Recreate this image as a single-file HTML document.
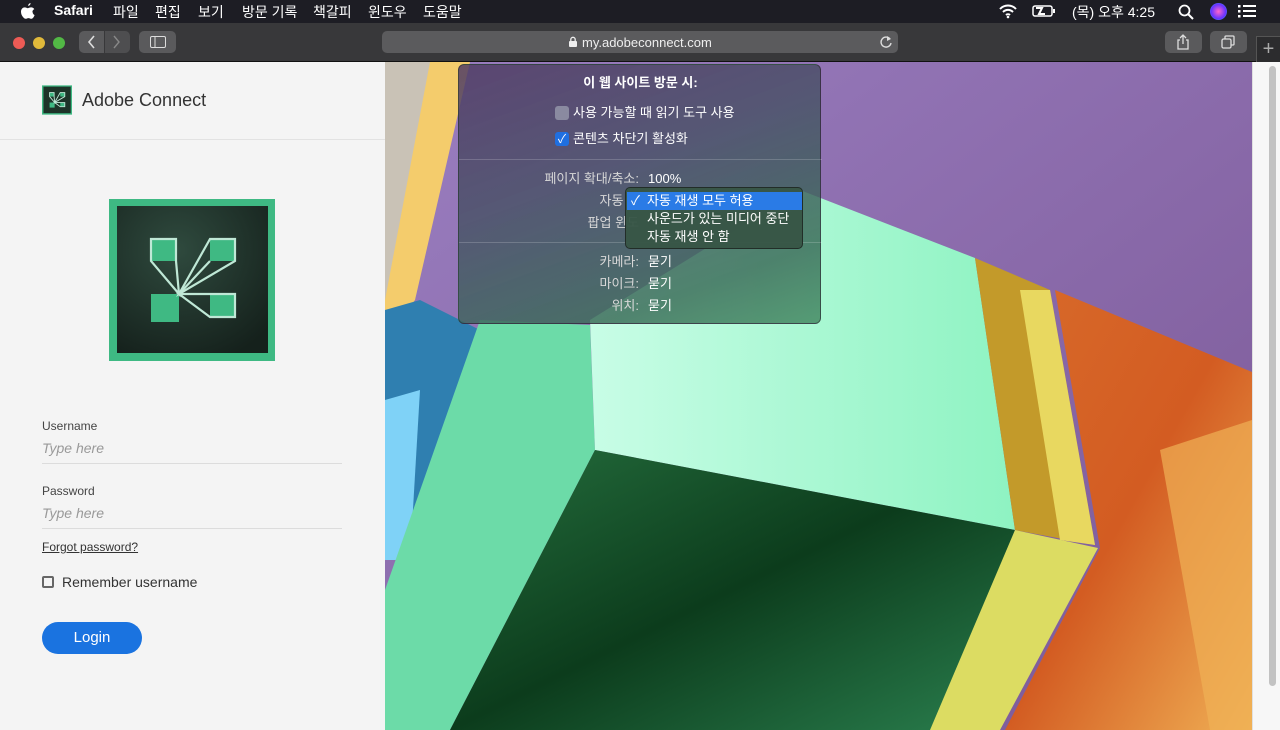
<!DOCTYPE html>
<html><head><meta charset="utf-8">
<style>
*{margin:0;padding:0;box-sizing:border-box}
body{width:1280px;height:730px;overflow:hidden;font-family:"Liberation Sans","Noto Sans CJK KR",sans-serif;background:#1e1e22;position:relative}
.menubar{position:absolute;left:0;top:0;width:1280px;height:23px;background:#1d1d24;color:#fff;font-size:14px}
.menubar span{position:absolute;top:2px}
.toolbar{position:absolute;left:0;top:23px;width:1280px;height:39px;background:#38383a;border-bottom:1px solid #111}
.btn{position:absolute;background:#5a5a5c;border-radius:5px}
.left{position:absolute;left:0;top:62px;width:385px;height:668px;background:#f4f4f4}
.bg{position:absolute;left:385px;top:62px;width:867px;height:668px}
.scroll{position:absolute;left:1252px;top:62px;width:28px;height:668px;background:#f7f7f7;border-left:1px solid #e0e0e0}
.pop{position:absolute;left:458px;top:64px;width:363px;height:260px;border-radius:6px;background:linear-gradient(160deg,rgba(80,60,100,0.85) 0%,rgba(70,80,100,0.8) 40%,rgba(60,110,90,0.85) 80%,rgba(70,140,100,0.85) 100%);border:1px solid rgba(30,30,30,0.5);color:#fff;font-size:13px;line-height:16px}
.pop .t{position:absolute;white-space:nowrap}
.lbl{color:#d8d8d8;text-align:right;width:170px;left:10px}
.sep{position:absolute;left:0;width:363px;height:1px;background:rgba(255,255,255,0.18)}
.dd{position:absolute;left:625px;top:187px;width:178px;height:62px;background:rgba(55,85,70,0.96);border:1px solid rgba(20,20,20,0.6);border-radius:5px;color:#fff;font-size:13px;line-height:16px}
</style></head><body>
<div class="menubar">
<svg style="position:absolute;left:20px;top:3px" width="15" height="17" viewBox="0 0 15 17"><path d="M10.5 0c.2 1.3-.9 2.8-2.3 2.9-.2-1.2 1-2.7 2.3-2.9zM12.6 9c0 2.2 1.9 3 2 3-.5 1.6-1.7 3.8-3.2 3.8-1.2 0-1.5-.7-2.9-.7s-1.8.7-2.9.7C4 15.8 1 12.6 1 8.8 1 6 2.9 4.4 4.7 4.4c1.300 0 2.1.8 3.1.8.9 0 1.9-.9 3.3-.8.6 0 2.2.2 3.2 1.7-2.5 1.5-1.7 2.9-1.7 2.9z" fill="#fff"/></svg>
<span style="left:54px;font-weight:bold">Safari</span>
<span style="left:113px">파일</span><span style="left:155px">편집</span><span style="left:198px">보기</span><span style="left:242px">방문 기록</span><span style="left:313px">책갈피</span><span style="left:368px">윈도우</span><span style="left:423px">도움말</span>
<svg style="position:absolute;left:998px;top:4px" width="20" height="15" viewBox="0 0 20 15"><path d="M2 5a11 11 0 0 1 16 0M5 8a7 7 0 0 1 10 0M8 11a3 3 0 0 1 4 0" stroke="#fff" stroke-width="2" fill="none"/><circle cx="10" cy="13" r="1.3" fill="#fff"/></svg>
<svg style="position:absolute;left:1032px;top:5px" width="24" height="12" viewBox="0 0 24 12"><rect x="1" y="1" width="19" height="10" rx="2" stroke="#fff" fill="none" stroke-width="1.5"/><rect x="21" y="4" width="2" height="4" fill="#fff"/><path d="M4 3h6l-3 6h6" stroke="#fff" stroke-width="2" fill="none"/></svg>
<span style="left:1072px">(목) 오후 4:25</span>
<svg style="position:absolute;left:1178px;top:4px" width="16" height="16"><circle cx="6.5" cy="6.5" r="5" stroke="#fff" stroke-width="1.8" fill="none"/><path d="M10 10l5 5" stroke="#fff" stroke-width="2"/></svg>
<div style="position:absolute;left:1210px;top:3px;width:17px;height:17px;border-radius:50%;background:radial-gradient(circle,#f6c,#63f 60%,#3cf)"></div>
<svg style="position:absolute;left:1238px;top:5px" width="18" height="13"><g fill="#fff"><rect x="0" y="0" width="2.5" height="2.5"/><rect x="0" y="5" width="2.5" height="2.5"/><rect x="0" y="10" width="2.5" height="2.5"/><rect x="5" y="0" width="13" height="2"/><rect x="5" y="5" width="13" height="2"/><rect x="5" y="10" width="13" height="2"/></g></svg>
</div>
<div class="toolbar">
<div style="position:absolute;left:13px;top:14px;width:12px;height:12px;border-radius:50%;background:#ed5b55"></div>
<div style="position:absolute;left:33px;top:14px;width:12px;height:12px;border-radius:50%;background:#e0b93a"></div>
<div style="position:absolute;left:53px;top:14px;width:12px;height:12px;border-radius:50%;background:#52b845"></div>
<div class="btn" style="left:79px;top:8px;width:25px;height:22px;border-radius:5px 0 0 5px"></div>
<div class="btn" style="left:105px;top:8px;width:25px;height:22px;border-radius:0 5px 5px 0;background:#4e4e50"></div>
<svg style="position:absolute;left:86px;top:12px" width="40" height="14"><path d="M8 1L3 7l5 6" stroke="#ddd" stroke-width="1.6" fill="none"/><path d="M28 1l5 6-5 6" stroke="#888" stroke-width="1.4" fill="none"/></svg>
<div class="btn" style="left:139px;top:8px;width:37px;height:22px"></div>
<svg style="position:absolute;left:150px;top:13px" width="16" height="12"><rect x=".5" y=".5" width="15" height="11" rx="1.5" stroke="#ddd" fill="none"/><path d="M5 .5v11" stroke="#ddd"/></svg>
<div class="btn" style="left:382px;top:8px;width:516px;height:22px;background:#5b5b5d"></div>
<svg style="position:absolute;left:568px;top:13px" width="10" height="12"><rect x="1" y="5" width="8" height="6" rx="1" fill="#eee"/><path d="M2.8 5V3.5a2.2 2.2 0 0 1 4.4 0V5" stroke="#eee" stroke-width="1.3" fill="none"/></svg>
<span style="position:absolute;left:582px;top:12px;color:#eee;font-size:13px">my.adobeconnect.com</span>
<svg style="position:absolute;left:879px;top:12px" width="14" height="14"><path d="M11 4A5 5 0 1 0 12 8" stroke="#ddd" stroke-width="1.4" fill="none"/><path d="M8 1l4 3-4 2" fill="#ddd"/></svg>
<div class="btn" style="left:1165px;top:8px;width:37px;height:22px"></div>
<svg style="position:absolute;left:1176px;top:11px" width="14" height="16"><path d="M4 6H2v9h10V6h-2M7 10V1M4 4l3-3 3 3" stroke="#ddd" stroke-width="1.3" fill="none"/></svg>
<div class="btn" style="left:1210px;top:8px;width:37px;height:22px"></div>
<svg style="position:absolute;left:1221px;top:12px" width="14" height="14"><rect x="1" y="4" width="9" height="9" rx="1.5" stroke="#ddd" fill="none" stroke-width="1.3"/><path d="M4 4V2a1 1 0 0 1 1-1h7a1 1 0 0 1 1 1v7a1 1 0 0 1-1 1h-2" stroke="#ddd" fill="none" stroke-width="1.3"/></svg>
<div style="position:absolute;left:1256px;top:13px;width:24px;height:26px;background:#2c2c2e;border-left:1px solid #555;border-top:1px solid #555;color:#aaa;font-size:20px;text-align:center;line-height:24px">+</div>
</div>

<div class="left">
<div style="position:absolute;left:0;top:77px;width:385px;height:1px;background:#e2e2e2"></div>
<svg style="position:absolute;left:42px;top:23px" width="30" height="30" viewBox="0 0 166 162">
<rect x="0" y="0" width="166" height="162" fill="#3eb983"/>
<rect x="8" y="7" width="151" height="147" fill="#1d3328"/>
<g fill="#3fb983"><rect x="42" y="40" width="25" height="22"/><rect x="101" y="40" width="25" height="22"/><rect x="42" y="95" width="28" height="28"/><rect x="101" y="96" width="25" height="22"/></g>
<g stroke="#bfe8d6" stroke-width="5" fill="none"><path d="M42 40h25v22L70 95 42 62z"/><path d="M70 95L101 40h25v22z"/><path d="M70 95h56v23h-25z"/></g>
</svg>
<span style="position:absolute;left:82px;top:28px;font-size:18px;color:#333">Adobe Connect</span>
<svg style="position:absolute;left:109px;top:137px" width="166" height="162" viewBox="0 0 166 162">
<defs><radialGradient id="g" cx=".4" cy=".3" r=".8"><stop offset="0" stop-color="#2f4a3e"/><stop offset="1" stop-color="#15211c"/></radialGradient></defs>
<rect x="0" y="0" width="166" height="162" fill="#3eb983"/>
<rect x="8" y="7" width="151" height="147" fill="url(#g)"/>
<g fill="#3fb983"><rect x="42" y="40" width="25" height="22"/><rect x="101" y="40" width="25" height="22"/><rect x="42" y="95" width="28" height="28"/><rect x="101" y="96" width="25" height="22"/></g>
<g stroke="#bfe8d6" stroke-width="2.2" fill="none"><path d="M42 40h25v22L70 95 42 62z"/><path d="M70 95L101 40h25v22z"/><path d="M70 95L101 62"/><path d="M70 95h56v23h-25z"/></g>
</svg>
<span style="position:absolute;left:42px;top:357px;font-size:12px;color:#444">Username</span>
<span style="position:absolute;left:42px;top:378px;font-size:14px;color:#999;font-style:italic">Type here</span>
<div style="position:absolute;left:42px;top:401px;width:300px;height:1px;background:#dcdcdc"></div>
<span style="position:absolute;left:42px;top:422px;font-size:12px;color:#444">Password</span>
<span style="position:absolute;left:42px;top:443px;font-size:14px;color:#999;font-style:italic">Type here</span>
<div style="position:absolute;left:42px;top:466px;width:300px;height:1px;background:#dcdcdc"></div>
<span style="position:absolute;left:42px;top:478px;font-size:12px;color:#333;text-decoration:underline">Forgot password?</span>
<div style="position:absolute;left:42px;top:514px;width:12px;height:12px;border:2px solid #666;border-radius:2px"></div>
<span style="position:absolute;left:62px;top:512px;font-size:14px;color:#333">Remember username</span>
<div style="position:absolute;left:42px;top:560px;width:100px;height:32px;border-radius:16px;background:#1a73e0;color:#fff;font-size:15px;text-align:center;line-height:32px">Login</div>
</div>

<svg class="bg" viewBox="385 62 867 668" preserveAspectRatio="none">
<defs>
<linearGradient id="pu" x1="0" y1="0" x2="1" y2="1"><stop offset="0" stop-color="#9a7ec0"/><stop offset="1" stop-color="#7b5896"/></linearGradient>
<linearGradient id="mi" x1="0" y1="0" x2="1" y2="0"><stop offset="0" stop-color="#c8fde6"/><stop offset="1" stop-color="#8ef3c2"/></linearGradient>
<linearGradient id="dg" x1="0" y1="0" x2="1" y2="1"><stop offset="0" stop-color="#256f3e"/><stop offset=".5" stop-color="#0c3c1c"/><stop offset="1" stop-color="#2a7f4e"/></linearGradient>
<linearGradient id="or" x1="0" y1="0" x2="1" y2="1"><stop offset="0" stop-color="#d86a2a"/><stop offset=".5" stop-color="#d35c22"/><stop offset="1" stop-color="#f0b055"/></linearGradient>
</defs>
<rect x="385" y="62" width="867" height="668" fill="url(#pu)"/>
<polygon points="385,62 430,62 430,230 385,360" fill="#c9c2b6"/>
<polygon points="430,62 470,62 415,300 385,340 385,300" fill="#f4cc6c"/>
<polygon points="385,310 420,300 480,330 450,560 385,560" fill="#2f7fb0"/>
<polygon points="385,400 420,390 410,560 385,560" fill="#7fd2f7"/>
<polygon points="480,320 590,325 595,450 450,730 385,730 385,590" fill="#6cdba8"/>
<polygon points="590,320 800,190 975,258 1015,530 595,450" fill="url(#mi)"/>
<polygon points="595,450 1015,530 940,730 450,730" fill="url(#dg)"/>
<polygon points="975,258 1050,290 1095,545 1015,530" fill="#c39a2a"/>
<polygon points="1020,290 1050,290 1095,545 1060,540" fill="#e8d860"/>
<polygon points="1015,530 1098,548 1000,730 930,730" fill="#dcdc62"/>
<polygon points="1055,290 1252,372 1252,730 1005,730 1100,548" fill="url(#or)"/>
<polygon points="1160,450 1252,420 1252,730 1210,730" fill="#f0b055" opacity=".7"/>
</svg>
<div class="scroll"><div style="position:absolute;left:16px;top:4px;width:7px;height:620px;border-radius:4px;background:#c2c2c2"></div></div>

<div class="pop">
<div class="t" style="left:0;width:363px;text-align:center;top:10px;font-weight:bold">이 웹 사이트 방문 시:</div>
<div style="position:absolute;left:96px;top:41px;width:14px;height:14px;border-radius:3px;background:#8a8aa0"></div>
<div class="t" style="left:114px;top:40px">사용 가능할 때 읽기 도구 사용</div>
<div style="position:absolute;left:96px;top:67px;width:14px;height:14px;border-radius:3px;background:#1f6fe0;color:#fff;font-size:12px;line-height:14px;text-align:center">✓</div>
<div class="t" style="left:114px;top:66px">콘텐츠 차단기 활성화</div>
<div class="sep" style="top:94px"></div>
<div class="t lbl" style="top:106px">페이지 확대/축소:</div>
<div class="t" style="left:189px;top:106px">100%</div>
<div class="t lbl" style="top:128px">자동 재</div>
<div class="t lbl" style="top:150px">팝업 윈도</div>
<div class="sep" style="top:177px"></div>
<div class="t lbl" style="top:189px">카메라:</div><div class="t" style="left:189px;top:189px">묻기</div>
<div class="t lbl" style="top:211px">마이크:</div><div class="t" style="left:189px;top:211px">묻기</div>
<div class="t lbl" style="top:233px">위치:</div><div class="t" style="left:189px;top:233px">묻기</div>
</div>
<div class="dd">
<div style="position:absolute;left:1px;top:4px;width:175px;height:18px;background:#2a7be6"></div>
<div style="position:absolute;left:5px;top:5px">✓</div>
<div style="position:absolute;left:21px;top:5px">자동 재생 모두 허용</div>
<div style="position:absolute;left:21px;top:23px">사운드가 있는 미디어 중단</div>
<div style="position:absolute;left:21px;top:41px">자동 재생 안 함</div>
</div>
</body></html>
